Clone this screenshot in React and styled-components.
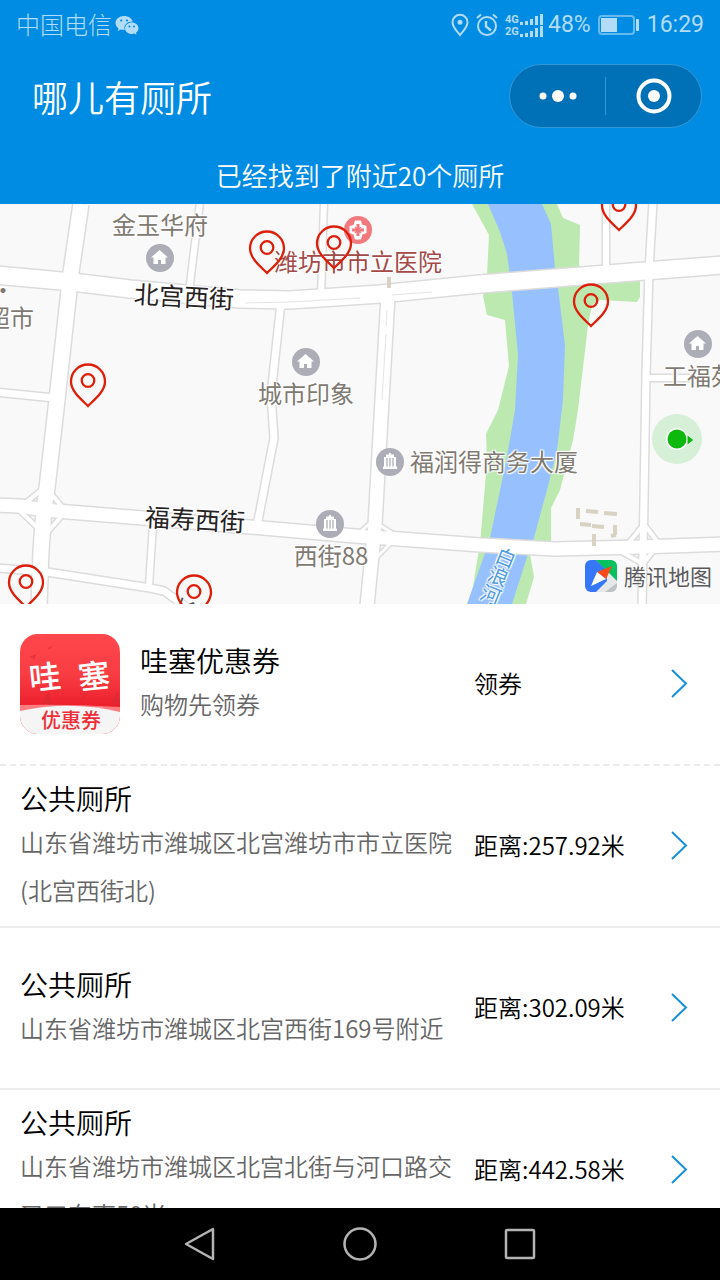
import React from 'react';
import styled, { createGlobalStyle } from 'styled-components';

const GlobalStyle = createGlobalStyle`
  * { box-sizing: border-box; }
  body {
    margin: 0;
    background: #fff;
    color: #000;
    font-family: "Noto Sans CJK SC", "Noto Sans", sans-serif;
    font-weight: 350;
  }
  h1, h2, p { margin: 0; font-weight: inherit; }
  button { border: 0; padding: 0; background: none; font: inherit; color: inherit; cursor: pointer; }
  svg { display: block; }
`;

const Screen = styled.div`
  display: flex;
  flex-direction: column;
  height: 100vh;
  overflow: hidden;
`;

const Header = styled.header`
  flex: none;
  background: #008ce3;
  color: #fff;
`;

const StatusBar = styled.div`
  display: flex;
  align-items: center;
  justify-content: space-between;
  height: 50px;
  padding: 0 16px;
  color: #b2dcf7;
  font-size: 24px;
`;

const StatusGroup = styled.div`
  display: flex;
  align-items: center;
  gap: ${(p) => p.$gap}px;
`;

const Carrier = styled.span`
  padding-bottom: 2px;
  font-weight: 300;
  line-height: 32px;
`;

const StatusValue = styled.span`
  font-family: Roboto, sans-serif;
  font-size: 23px;
  font-weight: 400;
  line-height: 28px;
`;

const NavBar = styled.div`
  display: flex;
  align-items: center;
  justify-content: space-between;
  height: 92px;
  padding: 0 18px 0 32px;
`;

const AppTitle = styled.h1`
  font-size: 36px;
  line-height: 48px;
`;

const Capsule = styled.div`
  display: flex;
  width: 193px;
  height: 64px;
  border: 1px solid #3398d8;
  border-radius: 32px;
  background: #0071b7;
`;

const CapsuleButton = styled.button`
  flex: 1;
  display: grid;
  place-items: center;
`;

const CapsuleDivider = styled.span`
  align-self: center;
  width: 1px;
  height: 38px;
  background: #3398d8;
`;

const Notice = styled.p`
  padding: 5px 0 1px;
  font-size: 26px;
  line-height: 56px;
  text-align: center;
`;

const MapPanel = styled.section`
  position: relative;
  flex: none;
  height: 400px;
  overflow: hidden;
  background: #f9f9f9;
`;

const MapDrawing = styled.svg`
  width: 100%;
  height: 100%;
`;

const MapLabel = styled.span`
  position: absolute;
  left: calc(50% + ${(p) => p.$x - 360}px);
  top: ${(p) => p.$y}px;
  transform: translate(-50%, -50%) rotate(${(p) => p.$angle || 0}deg);
  color: ${(p) => p.$color || '#7f7a72'};
  font-size: ${(p) => p.$size || 24}px;
  font-weight: 400;
  line-height: 32px;
  white-space: nowrap;
  writing-mode: ${(p) => (p.$vertical ? 'vertical-rl' : 'horizontal-tb')};
  text-shadow: 1px 1px 1px #fff, -1px -1px 1px #fff, 1px -1px 1px #fff, -1px 1px 1px #fff;
`;

const MapMark = styled.span`
  position: absolute;
  left: calc(50% + ${(p) => p.$x - 360}px);
  top: ${(p) => p.$y}px;
  transform: translate(-50%, -50%);
`;

const PinButton = styled.button`
  position: absolute;
  left: calc(50% + ${(p) => p.$x - 360}px);
  top: ${(p) => p.$y}px;
  transform: translate(-50%, -100%);
`;

const MapCredit = styled.div`
  position: absolute;
  right: 8px;
  bottom: 12px;
  display: flex;
  align-items: center;
  gap: 7px;
  color: #5c5c5e;
  font-size: 22px;
  font-weight: 400;
  line-height: 30px;
`;

const CreditName = styled.span`
  padding-bottom: 2px;
`;

const List = styled.main`
  flex: 1;
  min-height: 0;
  overflow: hidden;
`;

const Row = styled.article`
  display: grid;
  grid-template-columns: minmax(0, 1fr) 190px 24px;
  align-items: center;
  height: 162px;
  padding: 0 32px 0 20px;
  border-bottom: 2px ${(p) => (p.$dashed ? 'dashed' : 'solid')} #ececec;
`;

const RowMain = styled.div`
  display: flex;
  align-items: center;
  gap: 20px;
  padding-right: 20px;
`;

const RowTitle = styled.h2`
  font-size: 28px;
  line-height: 40px;
`;

const RowText = styled.p`
  color: #666;
  font-size: 24px;
  line-height: 48px;
`;

const RowValue = styled.p`
  padding-bottom: 2px;
  font-size: 24px;
  line-height: 32px;
`;

const AppIcon = styled.div`
  flex: none;
  width: 100px;
  height: 100px;
  border-radius: 18px;
  overflow: hidden;
`;

const SystemNav = styled.nav`
  flex: none;
  display: flex;
  align-items: center;
  justify-content: center;
  gap: 120px;
  height: 72px;
  background: #000;
`;

const SystemButton = styled.button`
  display: grid;
  place-items: center;
  width: 40px;
  height: 40px;
`;

const WechatIcon = () => (
  <svg width="24" height="22" viewBox="0 -1 24 22" fill="#b2dcf7">
    <path d="M9 1C4.300 1 .5 4.100.5 8c0 2.200 1.200 4.100 3 5.400L2.800 16l3-1.500c1 .3 2 .5 3.200.5h.7A7 7 0 0 1 9.300 13c0-3.700 3.500-6.600 7.800-6.600h.6C16.700 3.200 13.200 1 9 1z" />
    <path d="M23.500 13.200c0-3.200-3-5.800-6.700-5.800S10 10 10 13.200 13 19 16.800 19c.9 0 1.700-.1 2.500-.4l2.300 1.200-.6-2.100c1.500-1.100 2.500-2.700 2.500-4.500z" />
    <g fill="#008ce3">
      <circle cx="6.200" cy="5.500" r="1.100" />
      <circle cx="12" cy="5.500" r="1.100" />
      <circle cx="14.500" cy="11.500" r="1" />
      <circle cx="19" cy="11.500" r="1" />
    </g>
  </svg>
);

const LocationIcon = () => (
  <svg width="18" height="24" viewBox="0 0 18 24" fill="none" stroke="#b2dcf7" strokeWidth="2">
    <path d="M9 22C5 17.500 1.500 14 1.500 9.300a7.500 7.500 0 0 1 15 0C16.500 14 13 17.500 9 22z" />
    <circle cx="9" cy="9.300" r="2.500" fill="#b2dcf7" stroke="none" />
  </svg>
);

const AlarmIcon = () => (
  <svg width="22" height="24" viewBox="0 0 22 24" fill="none" stroke="#b2dcf7" strokeWidth="2">
    <circle cx="11" cy="13" r="9" />
    <path d="M1 5l4-3.500M21 5l-4-3.500" />
    <path d="M10 8v5.500l5 4" strokeWidth="2.400" />
  </svg>
);

const SignalBox = styled.span`
  display: grid;
  grid-template-columns: 15px 24px;
  row-gap: 1px;
  align-items: end;
  font: 700 11px/11px Roboto, sans-serif;
`;

const SignalBars = () => (
  <svg width="24" height="11" viewBox="0 0 24 11" fill="#b2dcf7">
    <path d="M0 8h3v3H0zM5 7h3v4H5zM10 5h3v6h-3zM15 2h3v9h-3zM20 0h3v11h-3z" />
  </svg>
);

const BatteryIcon = () => (
  <svg width="42" height="22" viewBox="0 0 42 22">
    <rect x="1" y="2" width="35" height="18" rx="3" fill="none" stroke="#66baee" strokeWidth="2" />
    <rect x="3" y="4" width="16" height="14" fill="#b2dcf7" />
    <rect x="38" y="5" width="3" height="12" rx="1" fill="#b2dcf7" />
  </svg>
);

const PinIcon = () => (
  <svg width="38" height="45" viewBox="0 0 38 45" fill="none" stroke="#dc1e0a" strokeWidth="2.300">
    <path d="M19 43C13 37 2 28.500 2 18.500a17 17 0 0 1 34 0C36 28.500 25 37 19 43z" />
    <circle cx="19" cy="17.500" r="6.300" />
  </svg>
);

const HomeMark = () => (
  <svg width="28" height="28" viewBox="0 0 28 28">
    <circle cx="14" cy="14" r="14" fill="#adadb7" />
    <path d="M13.500 6L5 13.500h2.500V20h4.500v-4h3v4h4.500v-6.500H22z" fill="#fff" />
  </svg>
);

const BuildingMark = () => (
  <svg width="28" height="28" viewBox="0 0 28 28">
    <circle cx="14" cy="14" r="14" fill="#adadb7" />
    <path d="M13 5h2v1.500h3V9h2v9.500h1V21H7v-2.500h1V9h2V6.500h3z" fill="#fff" />
    <path d="M11 10v8.500M14 10v8.500M17 10v8.500" stroke="#adadb7" strokeWidth="1.300" />
  </svg>
);

const HospitalMark = () => (
  <svg width="28" height="28" viewBox="0 0 28 28">
    <circle cx="14" cy="14" r="14" fill="#f2797d" />
    <path d="M11 4.500h6l1 4 4.500 1.500v7L18.500 18.500l-1.500 5h-6l-1.500-5-4-1.500v-7L9.500 9z" fill="#fff" />
    <path d="M14 8v12M8 14h12" stroke="#f2797d" strokeWidth="3" />
    <path d="M11 11l6 6M17 11l-6 6" stroke="#f2797d" strokeWidth="1.500" />
  </svg>
);

const UserMark = () => (
  <svg width="50" height="50" viewBox="0 0 50 50">
    <circle cx="25" cy="25" r="25" fill="#d6f0d8" />
    <circle cx="25" cy="25" r="11" fill="#fff" />
    <path d="M35 20.500l7 5.500-7 5.500z" fill="#0cb90c" stroke="#fff" />
    <circle cx="25" cy="25" r="9.500" fill="#0cb90c" />
  </svg>
);

const MapLogo = () => (
  <svg width="32" height="32" viewBox="0 0 32 32">
    <clipPath id="logoShape"><rect width="32" height="32" rx="6" /></clipPath>
    <g clipPath="url(#logoShape)">
      <rect width="32" height="32" fill="#e6e7e8" />
      <path d="M0 0h11l10 9 1 12L11 32H0z" fill="#3676f8" />
      <path d="M11 0h21v21l-7-7z" fill="#06c160" />
      <path d="M32 23v9H20z" fill="#c0c1c3" />
      <path d="M27 6l-6 13-9-7z" fill="#fa4a17" />
      <path d="M12 12l9 7L6 26z" fill="#fff" />
    </g>
  </svg>
);

const Chevron = () => (
  <svg width="24" height="32" viewBox="0 0 24 32" fill="none" stroke="#1690d9" strokeWidth="2">
    <path d="M8 2l14 13.500L8 29" />
  </svg>
);

const ROADS = [
  { w: 17, d: 'M81 0L71 68L57 196L47 284L44 306L41 346L39 402' },
  { w: 19, d: 'M-4 71L72 78L130 85L240 95L290 96L380 90L480 80L645 67L724 61' },
  { w: 15, d: 'M-4 301L20 302L44 306L143 314L250 323L355 332L400 335L480 341L555 345L640 343L724 340' },
  { w: 15, d: 'M388 92L382 196L375 321L367 402' },
  { w: 8, d: 'M200 -2L189 88' },
  { w: 8, d: 'M324 -2L321 92' },
  { w: 9, d: 'M281 98L271 191L274 234L257 322' },
  { w: 8, d: 'M606 -2V68' },
  { w: 9, d: 'M653 -2L649 66L646 171L644 296L642 402' },
  { w: 8, d: 'M646 174H690' },
  { w: 9, d: 'M-4 188L54 194' },
  { w: 8, d: 'M153 320L149 382' },
  { w: 9, d: 'M-4 364L47 368L150 384L164 387L188 404' },
  { w: 6, d: 'M45 283L66 307L45 331L18 305Z' },
  { w: 5, d: 'M376 314L358 330M378 320L397 332M394 336L376 354' },
  { w: 6, d: 'M644 320L659 340L643 360L620 347M644 320L628 340' },
];

const ROAD_NAME = '#26221f';

const LABELS = [
  { text: '金玉华府', x: 160, y: 20 },
  { text: '超市', x: 10, y: 113 },
  { text: '·', x: 3, y: 85 },
  { text: '城市印象', x: 306, y: 189 },
  { text: '工福苑', x: 699, y: 171 },
  { text: '福润得商务大厦', x: 494, y: 257 },
  { text: '西街88', x: 331, y: 351 },
  { text: '潍坊市市立医院', x: 358, y: 57, color: '#a34a48' },
  { text: '北宫西街', x: 184, y: 91, color: ROAD_NAME, angle: 3, size: 25 },
  { text: '福寿西街', x: 195, y: 314, color: ROAD_NAME, angle: 3, size: 25 },
  { text: '长', x: 184, y: 405, color: '#55524e', angle: 20 },
  { text: '白浪河', x: 498, y: 372, color: '#4f9be0', angle: 22, size: 20, vertical: true },
];

const MARKS = [
  { Icon: HomeMark, x: 160, y: 54 },
  { Icon: HomeMark, x: 306, y: 158 },
  { Icon: HomeMark, x: 698, y: 140 },
  { Icon: BuildingMark, x: 390, y: 258 },
  { Icon: BuildingMark, x: 330, y: 320 },
  { Icon: HospitalMark, x: 358, y: 26 },
  { Icon: UserMark, x: 677, y: 235 },
];

const PINS = [
  { x: 267, y: 71 },
  { x: 334, y: 66 },
  { x: 619, y: 28 },
  { x: 591, y: 124 },
  { x: 88, y: 204 },
  { x: 26, y: 405 },
  { x: 194, y: 415 },
];

const PLACES = [
  { title: '公共厕所', text: '山东省潍坊市潍城区北宫潍坊市市立医院(北宫西街北)', value: '距离:257.92米' },
  { title: '公共厕所', text: '山东省潍坊市潍城区北宫西街169号附近', value: '距离:302.09米' },
  { title: '公共厕所', text: '山东省潍坊市潍城区北宫北街与河口路交叉口东南50米', value: '距离:442.58米' },
];

const NearbyMap = () => (
  <MapPanel aria-label="地图">
    <MapDrawing viewBox="0 0 720 400" preserveAspectRatio="xMidYMid slice" aria-hidden="true">
      <path d="M472 0L489 31L487 70L483 92L487 111L505 116L509 162L498 206L486 230L487 258L480 340L470 400H526L534 373L530 350L551 337V304L560 286L573 236L578 206L588 121L592 101L600 96L637 98L640 93V76L579 62L580 21L563 14L557 0Z" fill="#bce9b0" />
      <path d="M488 0L500 28L507 50L512 88L518 151L515 206L506 258L490 334L484 352L467 400H512L527 353L533 337L547 286L557 246L563 196L565 141L558 84L555 64L551 20L542 0Z" fill="#97c0ff" />
      <g fill="none" stroke="#dcdcdc" strokeLinejoin="round">
        {ROADS.map((r) => <path key={r.d} d={r.d} strokeWidth={r.w + 1} />)}
      </g>
      <g fill="none" stroke="#fff" strokeLinejoin="round">
        {ROADS.map((r) => <path key={r.d} d={r.d} strokeWidth={r.w - 2} />)}
      </g>
      <path d="M387 106L386 122M386 130L382 196M245 99L290 98L360 94M392 91L432 88" fill="none" stroke="#e4e4e4" />
      <g fill="none" stroke="#d8d2c2" strokeWidth="4">
        <path d="M578 304V315M586 307L598 308M604 309L617 310M580 320L591 321M592 322L604 323M611 332L616 331M615 321V331M594 330V342M389 73V84" />
      </g>
    </MapDrawing>
    {MARKS.map(({ Icon, x, y }) => (
      <MapMark key={`${x}-${y}`} $x={x} $y={y}><Icon /></MapMark>
    ))}
    {LABELS.map((l) => (
      <MapLabel key={l.text} $x={l.x} $y={l.y} $color={l.color} $angle={l.angle} $size={l.size} $vertical={l.vertical}>
        {l.text}
      </MapLabel>
    ))}
    {PINS.map((p) => (
      <PinButton key={`${p.x}-${p.y}`} $x={p.x} $y={p.y} aria-label="公共厕所"><PinIcon /></PinButton>
    ))}
    <MapCredit><MapLogo /><CreditName>腾讯地图</CreditName></MapCredit>
  </MapPanel>
);

export default function App() {
  return (
    <Screen>
      <GlobalStyle />
      <Header>
        <StatusBar>
          <StatusGroup $gap={3}><Carrier>中国电信</Carrier><WechatIcon /></StatusGroup>
          <StatusGroup $gap={7}>
            <LocationIcon />
            <AlarmIcon />
            <StatusGroup $gap={4}>
              <SignalBox><span>4G</span><SignalBars /><span>2G</span><SignalBars /></SignalBox>
              <StatusValue>48%</StatusValue>
            </StatusGroup>
            <BatteryIcon />
            <StatusValue>16:29</StatusValue>
          </StatusGroup>
        </StatusBar>
        <NavBar>
          <AppTitle>哪儿有厕所</AppTitle>
          <Capsule>
            <CapsuleButton aria-label="更多">
              <svg width="40" height="12" viewBox="0 0 40 12" fill="#fff">
                <circle cx="5" cy="6" r="3.500" /><circle cx="20" cy="6" r="6" /><circle cx="35" cy="6" r="3.500" />
              </svg>
            </CapsuleButton>
            <CapsuleDivider />
            <CapsuleButton aria-label="关闭">
              <svg width="36" height="36" viewBox="0 0 36 36">
                <circle cx="18" cy="18" r="15.500" fill="none" stroke="#fff" strokeWidth="4" />
                <circle cx="18" cy="18" r="6" fill="#fff" />
              </svg>
            </CapsuleButton>
          </Capsule>
        </NavBar>
        <Notice>已经找到了附近20个厕所</Notice>
      </Header>
      <NearbyMap />
      <List>
        <Row $dashed>
          <RowMain>
            <AppIcon>
              <svg width="100" height="100" viewBox="0 0 100 100">
                <defs>
                  <linearGradient id="couponRed" x1="0" y1="0" x2="0" y2="1">
                    <stop offset="0" stopColor="#ff474c" />
                    <stop offset="0.400" stopColor="#f83d43" />
                    <stop offset="0.720" stopColor="#ed202d" />
                  </linearGradient>
                </defs>
                <rect width="100" height="100" fill="url(#couponRed)" />
                <path d="M9 23l8-3-3 5zM27 14l6-2-3 3zM22 70l6-12 5 12zM60 67l4-8 3 2zM90 69l8-12 2 12z" fill="#d52b35" opacity="0.600" />
                <path d="M0 71Q50 70 100 73V82H0z" fill="#ff7d80" />
                <path d="M0 77Q50 66 100 78V100H0z" fill="#f5f5f5" />
                <g fill="#fff" fontFamily="Noto Sans CJK SC, sans-serif" fontWeight="500" fontSize="32">
                  <text x="9" y="55" transform="rotate(-6 25 44)">哇</text>
                  <text x="58" y="54" transform="rotate(-6 74 44)">塞</text>
                </g>
                <text x="51" y="94" textAnchor="middle" fill="#ee2f38" fontFamily="Noto Sans CJK SC, sans-serif" fontWeight="500" fontSize="20">优惠券</text>
              </svg>
            </AppIcon>
            <div>
              <RowTitle>哇塞优惠券</RowTitle>
              <RowText>购物先领券</RowText>
            </div>
          </RowMain>
          <RowValue>领券</RowValue>
          <Chevron />
        </Row>
        {PLACES.map((p) => (
          <Row key={p.value}>
            <RowMain>
              <div>
                <RowTitle>{p.title}</RowTitle>
                <RowText>{p.text}</RowText>
              </div>
            </RowMain>
            <RowValue>{p.value}</RowValue>
            <Chevron />
          </Row>
        ))}
      </List>
      <SystemNav aria-label="系统导航">
        <SystemButton aria-label="返回">
          <svg width="34" height="36" viewBox="0 0 34 36" fill="none" stroke="#b3b3b3" strokeWidth="2.500" strokeLinejoin="round">
            <path d="M30 3v30L3 18z" />
          </svg>
        </SystemButton>
        <SystemButton aria-label="主页">
          <svg width="34" height="34" viewBox="0 0 34 34" fill="none" stroke="#b3b3b3" strokeWidth="2.500">
            <circle cx="17" cy="17" r="15.500" />
          </svg>
        </SystemButton>
        <SystemButton aria-label="最近任务">
          <svg width="32" height="32" viewBox="0 0 32 32" fill="none" stroke="#b3b3b3" strokeWidth="2.500">
            <rect x="2" y="2" width="28" height="28" rx="1" />
          </svg>
        </SystemButton>
      </SystemNav>
    </Screen>
  );
}
